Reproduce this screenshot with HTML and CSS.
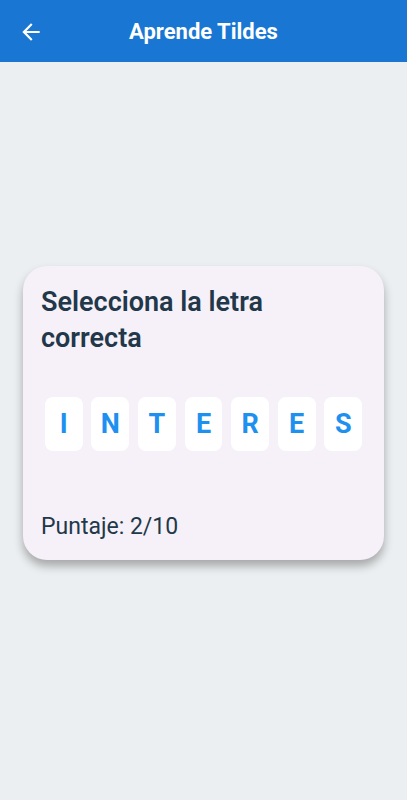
FILE: index.html
```html
<!DOCTYPE html>
<html>
<head>
    <title>Aprende Tildes</title>
    <meta charset="utf-8">
    <meta name="viewport" content="width=device-width, initial-scale=1">
    <link rel="stylesheet" href="styles.css">
</head>
<body>
    <div class="appbar">
        <svg class="back" viewBox="0 0 24 24" width="26" height="26">
            <path d="M20 11H7.83l5.59-5.59L12 4l-8 8 8 8 1.41-1.41L7.83 13H20v-2z" fill="#fff"/>
        </svg>
        <h1>Aprende Tildes</h1>
    </div>
    <div class="content">
        <div class="card">
            <h2>Selecciona la letra correcta</h2>
            <div class="letters">
                <div class="letter">I</div>
                <div class="letter">N</div>
                <div class="letter">T</div>
                <div class="letter">E</div>
                <div class="letter">R</div>
                <div class="letter">E</div>
                <div class="letter">S</div>
            </div>
            <p class="score">Puntaje: 2/10</p>
        </div>
    </div>
</body>
</html>
```

FILE: styles.css
```css
html, body {
    margin: 0;
    height: 100%;
}
body {
    background: #eceff1;
    font-family: Roboto, "Liberation Sans", sans-serif;
    display: flex;
    flex-direction: column;
}
.appbar {
    height: 62px;
    background: #1976d2;
    display: flex;
    align-items: center;
    justify-content: center;
    position: relative;
}
.appbar h1 {
    margin: 0;
    color: #fff;
    font-size: 22px;
    font-weight: 700;
}
.back {
    position: absolute;
    left: 18px;
    top: 19px;
}
.content {
    flex: 1;
    display: flex;
    flex-direction: column;
    justify-content: center;
    padding: 0 23px 36px;
}
.card {
    background: #f6f1f8;
    border-radius: 24px;
    padding: 18px 18px 19px;
    box-shadow: 0 6px 10px rgba(0,0,0,0.3);
}
.card h2 {
    margin: 0;
    font-size: 27px;
    line-height: 36px;
    font-weight: 600;
    color: #22384a;
}
.letters {
    display: flex;
    justify-content: center;
    gap: 8.8px;
    margin-top: 41px;
}
.letter {
    width: 37.8px;
    height: 54px;
    background: #fff;
    border-radius: 8px;
    display: flex;
    align-items: center;
    justify-content: center;
    color: #1e90f0;
    font-size: 27px;
    font-weight: 700;
}
.score {
    margin: 62px 0 0;
    font-size: 23px;
    line-height: 28px;
    color: #22384a;
}
```
